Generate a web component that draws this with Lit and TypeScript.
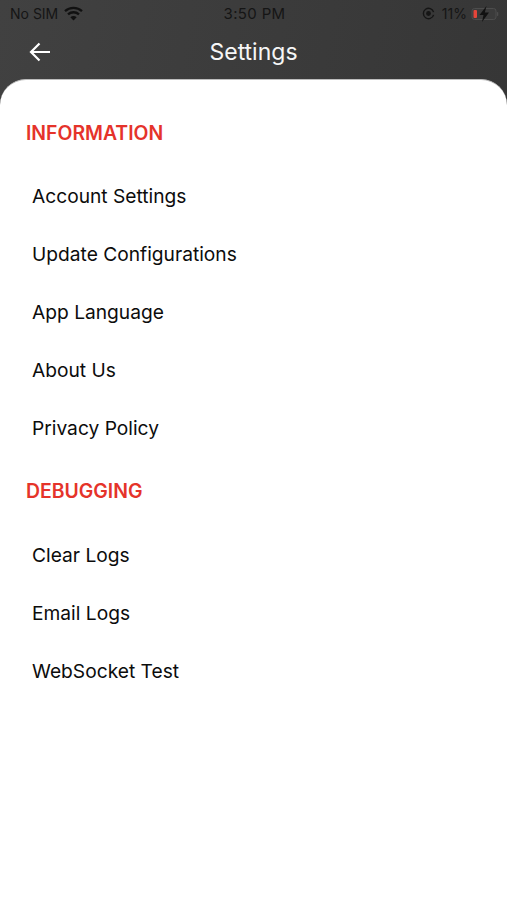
import { LitElement, html, css } from "lit";
import { customElement } from "lit/decorators.js";

const sections = [
  { title: "INFORMATION", items: ["Account Settings", "Update Configurations", "App Language", "About Us", "Privacy Policy"] },
  { title: "DEBUGGING", items: ["Clear Logs", "Email Logs", "WebSocket Test"] },
];

@customElement("app-root")
export class AppRoot extends LitElement {
  static styles = css`
    :host {
      display: block;
      width: 507px;
      height: 900px;
      overflow: hidden;
      font-family: Inter, "Liberation Sans", sans-serif;
      background: linear-gradient(100deg, #414141, #333333);
    }
    .status {
      height: 27px;
      display: grid;
      grid-template-columns: 1fr auto 1fr;
      align-items: center;
      padding: 0 8px 0 10px;
      font-size: 14px;
      color: #151515;
    }
    .time { font-size: 15px; letter-spacing: 0.35px; }
    .left, .right { display: flex; align-items: center; }
    .left { gap: 6px; }
    .right { justify-content: flex-end; gap: 4px; }
    .ring { margin-right: 3px; }
    .nav {
      height: 52px;
      box-sizing: border-box;
      padding: 0 29px 2px;
      display: grid;
      grid-template-columns: 1fr auto 1fr;
      align-items: center;
      color: #fff;
    }
    .nav svg { display: block; }
    .title { font-size: 23px; font-weight: 400; color: #f6f6f6; }
    .sheet {
      background: #fff;
      border-radius: 26px 26px 0 0;
      height: 821px;
      padding: 41px 0 0 26px;
      box-sizing: border-box;
      border-top: 1px solid #bdbdbd;
    }
    .head {
      height: 24px;
      line-height: 24px;
      font-size: 19.4px;
      font-weight: 600;
      color: #e5332a;
    }
    .list { padding: 22px 0 22px 6px; }
    .item {
      height: 58px;
      line-height: 58px;
      font-size: 19.2px;
      color: #0c0c0c;
    }
    section:last-child .list { padding: 23px 0 0 6px; }
  `;

  render() {
    return html`
      <div class="status">
        <div class="left">
          <span>No SIM</span>
          <svg width="19" height="15" viewBox="0 0 19 15"><g fill="none" stroke="#111" stroke-width="2.300"><path d="M1 5.200C5.800.8 13.200.8 18 5.200"/><path d="M4 8.400c3.200-2.900 7.800-2.900 11 0"/></g><path fill="#111" d="M9.500 14.500 6.300 11.200c1.800-1.700 4.600-1.700 6.400 0z"/></svg>
        </div>
        <span class="time">3:50 PM</span>
        <div class="right">
          <svg class="ring" width="13" height="13" viewBox="0 0 14 14"><path fill="none" stroke="#151515" stroke-width="1.500" d="M12.500 8.500A5.600 5.600 0 1 1 12.500 5.500"/><circle cx="7" cy="7" r="2.600" fill="#151515"/></svg>
          <span>11%</span>
          <svg width="28" height="16" viewBox="0 0 28 16"><rect x="1" y="2.500" width="24" height="11" rx="2.500" fill="#3b3b3b" stroke="#4d4d4d"/><rect x="2.500" y="4" width="3.500" height="8" rx="1" fill="#e5453a"/><rect x="25.800" y="6" width="1.500" height="4" rx="0.700" fill="#4d4d4d"/><path fill="#111" d="M15.500 0 8.500 9h4l-1.500 7 7-9.500h-4.200z"/></svg>
        </div>
      </div>
      <div class="nav">
        <svg width="22" height="20" viewBox="0 0 22 20"><path fill="none" stroke="#fff" stroke-width="2.200" d="M21 10H2.500M10.500 1.500 2 10l8.500 8.500"/></svg>
        <span class="title">Settings</span>
        <span></span>
      </div>
      <div class="sheet">
        ${sections.map(
          (s) => html`<section>
            <div class="head">${s.title}</div>
            <div class="list">${s.items.map((i) => html`<div class="item">${i}</div>`)}</div>
          </section>`
        )}
      </div>
    `;
  }
}
